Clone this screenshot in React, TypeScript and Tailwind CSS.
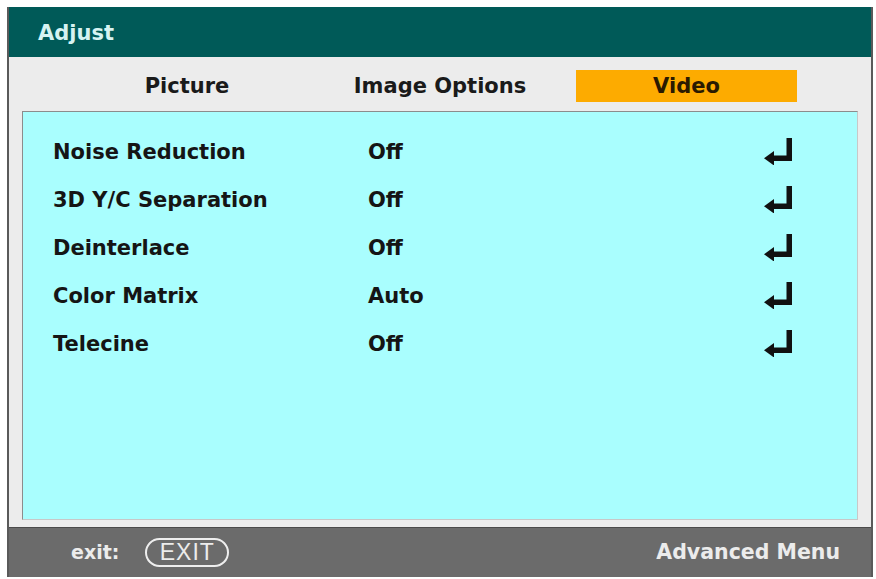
import React from 'react';

const font = { fontFamily: '"DejaVu Sans", "Liberation Sans", sans-serif' };

const rows = [
  { label: 'Noise Reduction', value: 'Off' },
  { label: '3D Y/C Separation', value: 'Off' },
  { label: 'Deinterlace', value: 'Off' },
  { label: 'Color Matrix', value: 'Auto' },
  { label: 'Telecine', value: 'Off' },
];

function EnterIcon() {
  return (
    <svg width="30" height="27" viewBox="0 0 30 27" className="block -mt-[4px]">
      <rect x="22.5" y="0" width="5.5" height="23" fill="#111" />
      <rect x="8" y="17.5" width="20" height="5.5" fill="#111" />
      <polygon points="0,20.25 10,13 10,27.5" fill="#111" />
    </svg>
  );
}

export default function App() {
  return (
    <div className="h-[579px] w-[876px] bg-white pt-[7px] pl-[7px]" style={font}>
      <div className="flex w-[866px] flex-col border-x-2 border-[#5a5a5a]">
        {/* Title bar */}
        <div className="flex h-[50px] items-center bg-[#005a58] pt-[3px] pl-[29px] text-[21px] font-bold text-[#d6f3f2]">
          Adjust
        </div>

        {/* Body */}
        <div className="bg-[#ececec] px-[13px] pb-[7px]">
          {/* Tabs */}
          <div className="flex h-[54px] items-center pt-[3px] text-[21px] font-bold text-[#1a1a1a]">
            <div className="ml-[54px] w-[222px] pt-[2px] text-center">Picture</div>
            <div className="ml-[31px] w-[222px] pt-[2px] text-center">Image Options</div>
            <div className="ml-[25px] flex h-[32px] w-[221px] items-center justify-center bg-[#fdab00] pt-[2px] text-[#2a1a00]">
              Video
            </div>
          </div>

          {/* Settings panel */}
          <div className="h-[409px] border border-[#8c8c8c] border-b-[#c8c8c8] border-r-[#c8c8c8] bg-[#a9fefe] pt-[17px] pl-[30px] pr-[63px]">
            {rows.map((r) => (
              <div key={r.label} className="flex h-[48px] items-center text-[21px] font-bold text-[#151515]">
                <div className="w-[315px]">{r.label}</div>
                <div className="flex-1">{r.value}</div>
                <EnterIcon />
              </div>
            ))}
          </div>
        </div>

        {/* Footer */}
        <div className="flex h-[50px] items-center border-t border-[#4a4a4a] bg-[#6b6b6b] pl-[62px] pr-[31px] text-[19px] font-bold text-[#ececec]">
          <span>exit:</span>
          <span
            className="ml-[26px] flex h-[29px] w-[84px] items-center justify-center rounded-full border-2 border-[#eeeeee] text-[23px] font-normal tracking-[1px]"
            style={{ fontFamily: '"Liberation Sans Narrow", "Liberation Sans", sans-serif' }}
          >
            EXIT
          </span>
          <span className="ml-auto text-[20.5px]">Advanced Menu</span>
        </div>
      </div>
    </div>
  );
}
